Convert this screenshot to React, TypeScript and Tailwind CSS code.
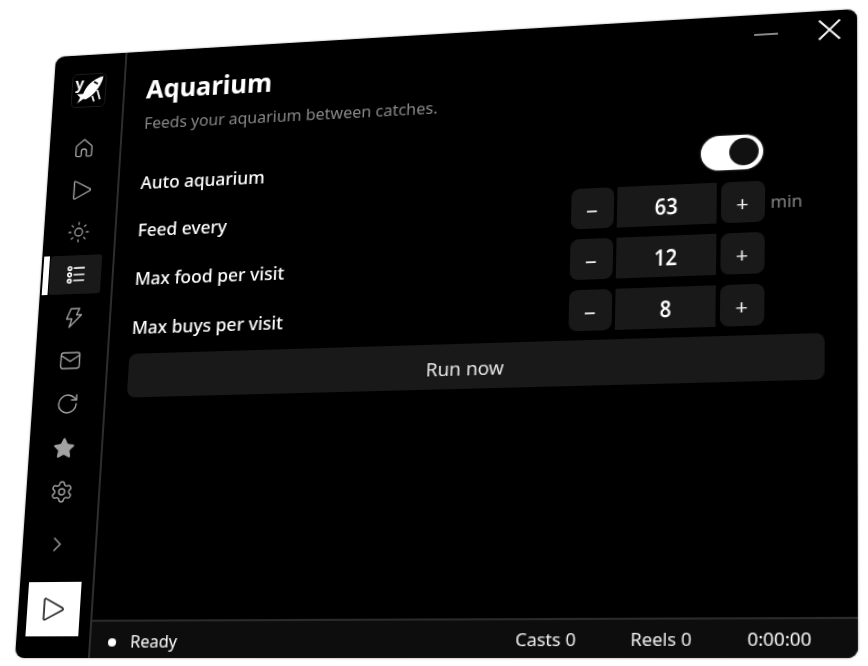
import React from "react";
import { ChevronRight, RotateCw, Settings, Star, Sun } from "lucide-react";

const font = "[font-family:'Noto_Sans',sans-serif]";

const HomeIcon = () => (
  <svg width="24" height="24" viewBox="0 0 24 24" fill="none" stroke="currentColor" strokeWidth="1.4" strokeLinejoin="round">
    <path d="M12 3 4.600 9.300a2 2 0 0 0-.8 1.600V19a1.600 1.600 0 0 0 1.600 1.600h3a1 1 0 0 0 1-1v-4a2.600 2.600 0 0 1 5.200 0v4a1 1 0 0 0 1 1h3a1.600 1.600 0 0 0 1.600-1.600v-8.100a2 2 0 0 0-.8-1.600z" />
  </svg>
);

const PlayIcon = ({ size = 24, width = 1.4 }: { size?: number; width?: number }) => (
  <svg width={size} height={size} viewBox="0 0 24 24" fill="none" stroke="currentColor" strokeWidth={width} strokeLinejoin="round">
    <path d="M4.500 3.800a1 1 0 0 1 1.500-.8l15 8.200a1 1 0 0 1 0 1.700L6 21a1 1 0 0 1-1.500-.8z" />
  </svg>
);

const ListIcon = () => (
  <svg width="22" height="22" viewBox="0 0 24 24" fill="none" stroke="currentColor" strokeWidth="1.8">
    <circle cx="5" cy="5" r="2" />
    <circle cx="5" cy="12" r="2" />
    <circle cx="5" cy="19" r="2" />
    <path d="M10 4.500h11M10 12h11M10 18.500h11" strokeLinecap="round" />
  </svg>
);

const BoltIcon = () => (
  <svg width="24" height="24" viewBox="0 0 24 24" fill="none" stroke="currentColor" strokeWidth="1.4" strokeLinejoin="round">
    <path d="M9.500 3h8.700l-2.700 6.500h5L8.500 22l2.300-8.500H5.500z" />
  </svg>
);

const MailIcon = () => (
  <svg width="24" height="24" viewBox="0 0 24 24" fill="none" stroke="currentColor" strokeWidth="1.4" strokeLinejoin="round">
    <rect x="2.500" y="4" width="19" height="16" rx="2.400" />
    <path d="m3 7 9 5.800L21 7" />
  </svg>
);

const LogoIcon = () => (
  <svg className="overflow-visible" width="34" height="34" viewBox="0 0 34 34">
    <text x="2.500" y="15" fontSize="16" fontWeight="700" fill="#f2f2f2" fontFamily="'Noto Sans', sans-serif">y</text>
    <path d="M32 2C26 3 21 6 17 10c-3 3-5 7-6 10H4l4 4-3 7 7-5 2 1c4-2 8-5 11-9 3-4 6-9 7-16z" fill="#fff" stroke="#000" strokeWidth="0.8" />
    <path d="M21 23l2 6M26 17l3 10" stroke="#e5e5e5" strokeWidth="2" />
    <path d="M22 8l4 2.500" stroke="#000" strokeWidth="1.800" />
  </svg>
);

const navItems = [
  { id: "home", icon: <HomeIcon /> },
  { id: "play", icon: <PlayIcon /> },
  { id: "sun", icon: <Sun size={24} strokeWidth={1.3} /> },
  { id: "list", icon: <ListIcon />, active: true },
  { id: "zap", icon: <BoltIcon /> },
  { id: "mail", icon: <MailIcon /> },
  { id: "refresh", icon: <RotateCw size={24} strokeWidth={1.4} /> },
  { id: "star", icon: <Star size={23} fill="currentColor" strokeWidth={1.3} /> },
  { id: "gear", icon: <Settings size={24} strokeWidth={1.4} /> },
];

const Stepper = ({ value, unit }: { value: number; unit?: string }) => (
  <div className="flex items-center gap-[3.5px]">
    <button className="flex h-10 w-10 items-center justify-center rounded-lg bg-[#191919] text-[22px] text-[#eee]">–</button>
    <div className="flex h-10 w-[92px] items-center justify-center bg-[#191919] text-white">
      <span className="scale-x-[0.85] text-[22px] font-semibold">{value}</span>
    </div>
    <button className="flex h-10 w-10 items-center justify-center rounded-lg bg-[#191919] pt-[3px] text-[20px] text-[#eee]">+</button>
    <span className="ml-[2px] w-[49px] pt-[1px] text-[16px] text-[#888]">{unit}</span>
  </div>
);

const Row = ({ label, children }: { label: string; children: React.ReactNode }) => (
  <div className="flex items-center justify-between first:h-[39px] h-10">
    <span className="pl-[1px] pt-[5px] text-[17.5px] font-medium text-white">{label}</span>
    {children}
  </div>
);

export default function App() {
  return (
    <div className="h-[666px] w-[868px] overflow-hidden bg-white">
      <div
        className={`flex h-[614px] w-[784px] origin-top-left overflow-hidden rounded-[9px] bg-black shadow-[0_0_2px_rgba(0,0,0,0.5)] blur-[0.3px] [transform:matrix3d(0.94084,-0.062074,0,-0.00009434,-0.06799,0.92554,0,-0.00008099,0,0,1,0,56,57,0,1)] ${font}`}
      >
        <aside className="flex w-[75px] shrink-0 flex-col border-r-2 border-[#2e2e2e] pt-5">
          <div className="mx-auto flex h-9 w-9 items-center justify-center rounded-[5px] border border-[#1c1c1c]">
            <LogoIcon />
          </div>
          <nav className="mt-[23px] flex flex-col gap-1">
            {navItems.map((item) => (
              <div key={item.id} className="relative flex h-10 justify-center pl-[9px] pr-[11px]">
                {item.active && <span className="absolute left-[2px] top-0 h-10 w-[6px] bg-white" />}
                <div
                  className={`flex h-10 w-[53px] items-center justify-center rounded-[3px] ${
                    item.active ? "bg-[#191919] text-white" : "text-[#a3a3a3]"
                  }`}
                >
                  {item.icon}
                </div>
              </div>
            ))}
          </nav>
          <div className="mt-[12px] flex h-10 items-center justify-center pr-[4px] text-[#a3a3a3]">
            <ChevronRight size={24} strokeWidth={1.4} />
          </div>
          <div className="mt-[17px] ml-[9px] flex h-[53px] w-[53px] items-center justify-center bg-white pr-[2px] text-[#222]">
            <PlayIcon size={27} width={1.5} />
          </div>
        </aside>

        <main className="flex min-w-0 flex-1 flex-col">
          <div className="flex-1 pl-[21px] pr-[29px]">
            <header className="flex h-[116px] items-start justify-between">
              <div className="pl-[1px] pt-[22px]">
                <h1 className="text-[26px] font-bold leading-9 text-white">Aquarium</h1>
                <p className="mt-[6px] text-[16px] text-[#888]">Feeds your aquarium between catches.</p>
              </div>
              <div className="-mr-[15px] flex items-center gap-[36px] pt-2 text-white">
                <span className="mt-[1px] h-[2px] w-[22px] bg-[#888]" />
                <svg width="22" height="22" viewBox="0 0 22 22" stroke="currentColor" strokeWidth="1.8">
                  <path d="M1.500 1.500l19 19M20.500 1.500l-19 19" />
                </svg>
              </div>
            </header>

            <div className="flex flex-col gap-[10px]">
              <Row label="Auto aquarium">
                <div className="mr-[56px] flex h-[34px] w-[57px] items-center justify-end rounded-full bg-white pr-1 shadow-[0_0_2px_rgba(255,255,255,0.6)]">
                  <span className="h-[27px] w-[27px] rounded-full bg-[#111]" />
                </div>
              </Row>
              <Row label="Feed every">
                <Stepper value={63} unit="min" />
              </Row>
              <Row label="Max food per visit">
                <Stepper value={12} />
              </Row>
              <Row label="Max buys per visit">
                <Stepper value={8} />
              </Row>
            </div>

            <button className="mt-[9px] h-[44px] w-full rounded-lg bg-[#191919] pt-[5px] text-[18px] text-[#e5e5e5]">Run now</button>
          </div>

          <footer className="flex h-[37px] items-center border-t-2 border-[#2a2a2a] bg-[#0d0d0d] pr-[40px] text-[16px] text-[#f0f0f0]">
            <span className="ml-[17px] mt-[5px] h-2 w-2 rounded-full bg-white" />
            <span className="ml-[14px] pt-[2px] text-white">Ready</span>
            <div className="ml-auto flex gap-[49px] pt-[2px] text-[16.5px]">
              <span>Casts 0</span>
              <span>Reels 0</span>
              <span className="text-white">0:00:00</span>
            </div>
          </footer>
        </main>
      </div>
    </div>
  );
}
